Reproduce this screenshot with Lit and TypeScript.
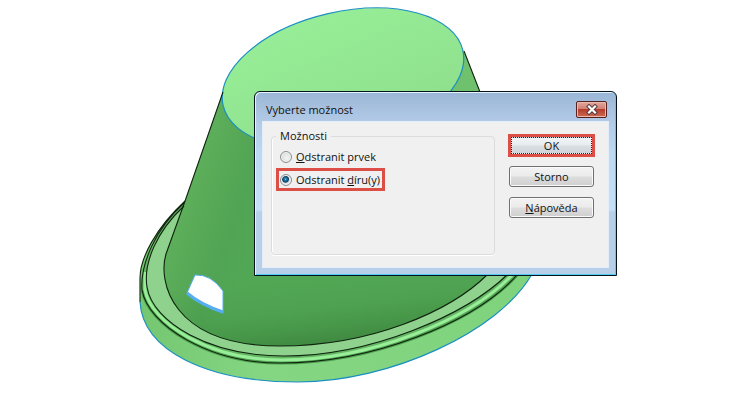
import { LitElement, html, css, svg } from "lit";
import { customElement, state } from "lit/decorators.js";

const wallFoot = "M184 204L166 254C158 280 170 346 280 346C370 346 450 312 488 274";
const rimInner = "M184 206C158 230 143 262 147 287C153 323 210 356 284 356C370 356 465 316 508 274";
const rimMiddle = "M184 203C156 228 140 264 142 290C148 325 208 363 280 363C370 363 474 324 518 274";
const rimLight = "M145 272V290C151 323 209 360 282 360C370 360 470 320 513 274";
const rimShade = "M142 290C148 325 208 363 280 363C370 363 474 324 518 274";
const rimOuter = "M185 201C156 228 140 258 140 278V302";
const base = "C143 350 205 382 298 382C390 382 500 331 532 274";

@customElement("part-view")
export class PartView extends LitElement {
  static styles = css`
    :host { display: block; }
    svg { display: block; width: 100%; height: auto; }
    .edge { fill: none; stroke: #10240f; stroke-width: 1.1; }
    .picked { fill: none; stroke: #1b8fc0; stroke-width: 1.2; }
    .light { fill: none; stroke: #98ee98; stroke-width: 3; }
    .shade { fill: none; stroke: #4c9c4c; stroke-width: 3; }
  `;

  render() {
    return html`
      <svg viewBox="0 0 750 402" role="img" aria-label="Model">
        ${svg`
        <defs>
          <linearGradient id="top" x1="0" y1="0" x2="0.3" y2="1">
            <stop offset="0" stop-color="#98ef98"></stop>
            <stop offset="1" stop-color="#8fe08d"></stop>
          </linearGradient>
          <linearGradient id="wall" gradientUnits="userSpaceOnUse" x1="188" y1="200" x2="262" y2="226">
            <stop offset="0" stop-color="#5cae5a"></stop>
            <stop offset="0.3" stop-color="#57a957"></stop>
            <stop offset="0.65" stop-color="#50a453"></stop>
            <stop offset="1" stop-color="#52a755"></stop>
          </linearGradient>
          <linearGradient id="foot" gradientUnits="userSpaceOnUse" x1="300" y1="276" x2="308" y2="346">
            <stop offset="0" stop-color="#439345" stop-opacity="0"></stop>
            <stop offset="0.5" stop-color="#439345" stop-opacity="0.3"></stop>
            <stop offset="1" stop-color="#3d853e" stop-opacity="0.9"></stop>
          </linearGradient>
          <linearGradient id="side" x1="0" y1="0" x2="1" y2="0">
            <stop offset="0" stop-color="#74c671"></stop>
            <stop offset="0.3" stop-color="#84d682"></stop>
            <stop offset="1" stop-color="#80d37d"></stop>
          </linearGradient>
        </defs>
        <path fill="url(#side)" d="${rimOuter}${base}Z"></path>
        <path fill="#64b463" d="${rimMiddle}Z"></path>
        <path class="shade" d="${rimShade}"></path>
        <path class="light" d="${rimLight}"></path>
        <path fill="#8ed28d" d="${rimInner}Z"></path>
        <path fill="url(#wall)" d="${wallFoot}L540 274L464 55L223 92Z"></path>
        <path fill="url(#foot)" d="${wallFoot}Z"></path>
        <path fill="#70c16e" d="M464 51L480 92H440Z"></path>
        <g transform="rotate(-13 343 78)">
          <ellipse fill="url(#top)" class="top" cx="343" cy="78" rx="123" ry="66"></ellipse>
          <ellipse class="picked" cx="343" cy="78" rx="123" ry="66"></ellipse>
        </g>
        <path class="edge" d="M223 92L184 204M464 51L480 92"></path>
        <path class="edge" d="${wallFoot}"></path>
        <path class="edge" d="${rimInner}"></path>
        <path class="edge" d="${rimMiddle}"></path>
        <path class="edge" d="${rimOuter}"></path>
        <path class="picked" d="M140 302${base}"></path>
        <path fill="#fff" stroke="#55aef0" d="M195 275Q211 274 223 291V313Q204 307 187 293Z"></path>
        <path fill="none" stroke="#55aef0" stroke-width="3" d="M187 293Q201 305 223 312"></path>
        `}
      </svg>
    `;
  }
}

@customElement("app-root")
export class AppRoot extends LitElement {
  @state() private choice = "holes";

  static styles = css`
    :host {
      display: block;
      position: relative;
      overflow: hidden;
      background: #fff;
      color: #111;
      font: 11px/16px "Open Sans", "Noto Sans", sans-serif;
    }
    .dialog {
      position: absolute;
      left: 254px;
      top: 91px;
      box-sizing: border-box;
      width: 363px;
      border: 1px solid #06131c;
      border-radius: 6px 6px 0 0;
      padding: 0 7px 7px;
      background: linear-gradient(#9ab6d6, #b2cae6 30px, #bcd9f1 60px, #c6e0f6 118px, #b8cfe9 120px, #b8cfe9);
      box-shadow: inset 1px 1px #e4f4fd, inset -1px -1px #50cdf0;
    }
    .title {
      display: flex;
      align-items: center;
      justify-content: space-between;
      height: 29px;
      padding: 0 2px 0 4px;
    }
    h1 { margin: 6px 0 0; font: inherit; }
    .close {
      display: grid;
      place-items: center;
      box-sizing: border-box;
      width: 31px;
      height: 17px;
      margin: 6px 0 0;
      padding: 0;
      border: 1px solid #54211f;
      border-radius: 2px;
      background: linear-gradient(#e3a79d, #d07f72 48%, #b63c2b 50%, #cd6a54);
      box-shadow: inset 0 0 0 1px #eab9ae;
    }
    .client {
      display: flex;
      align-items: flex-start;
      gap: 14px;
      box-sizing: border-box;
      min-height: 146px;
      padding: 6px 14px 12px 8px;
      border: 1px solid #e3eefa;
      background: #f0f0f0;
    }
    fieldset {
      flex: 1;
      box-sizing: border-box;
      min-height: 127px;
      min-width: 0;
      margin: 0;
      padding: 1px 4px;
      border: 1px solid #dadcdd;
      border-radius: 4px;
      box-shadow: inset 1px 0 #fff, 0 1px #fff;
    }
    legend { padding: 0 4px; }
    .option {
      display: flex;
      align-items: center;
      gap: 4px;
      box-sizing: border-box;
      width: max-content;
      height: 23px;
      padding: 0 4px;
    }
    .marked { padding: 0 2px 0 1px; border: 3px solid #dc4f47; }
    input {
      appearance: none;
      box-sizing: border-box;
      width: 12px;
      height: 12px;
      margin: 0;
      border: 1px solid #8b8e90;
      border-radius: 50%;
      background: radial-gradient(circle at 60% 60%, #f4f4f4, #cfd1d3);
      box-shadow: inset 0 0 0 1px #f4f4f4;
    }
    input:checked {
      background: radial-gradient(circle at 45% 42%, #7fd5f2 0, #2585b0 1px, #103f63 3px, #dfe3e6 4px);
    }
    .actions {
      display: flex;
      flex-direction: column;
      gap: 10px;
      width: 85px;
      padding-top: 7px;
    }
    .actions button {
      box-sizing: border-box;
      height: 21px;
      padding: 0;
      border: 1px solid #707070;
      border-radius: 3px;
      background: linear-gradient(#f3f3f3, #ebebeb 48%, #dddddd 52%, #cfcfcf);
      box-shadow: inset 0 0 0 1px #fafafa;
      color: inherit;
      font: inherit;
      line-height: 18px;
    }
    .actions .ok {
      border: 1px dotted #222;
      border-radius: 0;
      height: 17px;
      margin: 2px;
      background: linear-gradient(#f1f4f6, #e8ecef 48%, #dadfe3 52%, #ced5da);
      box-shadow: none;
      outline: 3px solid #dc4f47;
      line-height: 15px;
    }
  `;

  private option(value: string, marked: boolean, label: unknown) {
    return html`
      <label class="option ${marked ? "marked" : ""}">
        <input
          type="radio"
          name="option"
          .checked=${this.choice === value}
          @change=${() => (this.choice = value)}
        />
        <span>${label}</span>
      </label>
    `;
  }

  render() {
    return html`
      <part-view></part-view>
      <section class="dialog" role="dialog" aria-labelledby="title">
        <header class="title">
          <h1 id="title">Vyberte možnost</h1>
          <button class="close" aria-label="Zavřít">
            <svg width="12" height="11" viewBox="0 0 12 11">
              <path d="M3 2.5L9 8.5M9 2.5L3 8.5" stroke="#4d3838" stroke-width="4" stroke-linecap="square"></path>
              <path d="M3 2.5L9 8.5M9 2.5L3 8.5" stroke="#fff" stroke-width="2.2" stroke-linecap="square"></path>
            </svg>
          </button>
        </header>
        <div class="client">
          <fieldset>
            <legend>Možnosti</legend>
            ${this.option("feature", false, html`<u>O</u>dstranit prvek`)}
            ${this.option("holes", true, html`Odstranit <u>d</u>íru(y)`)}
          </fieldset>
          <div class="actions">
            <button class="ok">OK</button>
            <button>Storno</button>
            <button><u>N</u>ápověda</button>
          </div>
        </div>
      </section>
    `;
  }
}
